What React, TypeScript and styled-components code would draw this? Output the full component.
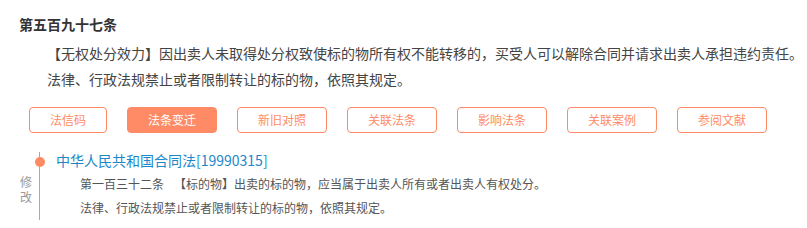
import React from "react";
import styled, { createGlobalStyle } from "styled-components";

const ACCENT = "#ff8b66";

const GlobalStyle = createGlobalStyle`
  html, body {
    margin: 0;
    padding: 0;
    background: #fff;
  }
  body {
    font-family: "Microsoft YaHei", "Noto Sans CJK SC", "Noto Sans", sans-serif;
    color: #333;
  }
`;

const tabs = ["法信码", "法条变迁", "新旧对照", "关联法条", "影响法条", "关联案例", "参阅文献"];

const Page = styled.div`
  padding: 13px 0 0 19px;
  width: 788px;
`;

const Title = styled.h3`
  margin: 0;
  font-size: 14px;
  line-height: 22px;
  font-weight: 700;
  color: #333;
`;

const Article = styled.p`
  margin: 5px 0 0;
  padding-left: 28px;
  font-size: 14px;
  line-height: 26px;
  color: #444;
`;

const TabBar = styled.div`
  display: flex;
  gap: 20px;
  margin-top: 15px;
  padding-left: 10px;
`;

const Tab = styled.button<{ $active?: boolean }>`
  height: 26px;
  padding: 0 20px;
  border: 1px solid ${ACCENT};
  border-radius: 4px;
  background: ${(p) => (p.$active ? ACCENT : "#fff")};
  color: ${(p) => (p.$active ? "#fff" : ACCENT)};
  font-family: inherit;
  font-size: 12px;
  line-height: 24px;
  cursor: pointer;
  white-space: nowrap;
`;

const Timeline = styled.div`
  display: flex;
  margin-top: 19px;
  padding-left: 1px;
`;

const Label = styled.div`
  width: 12px;
  align-self: center;
  margin-top: 6px;
  font-size: 12px;
  line-height: 15px;
  color: #999;
`;

const Track = styled.div`
  position: relative;
  width: 1px;
  margin-left: 7px;
  background: ${ACCENT};
`;

const Dot = styled.span`
  position: absolute;
  top: 5px;
  left: -4.5px;
  width: 10px;
  height: 10px;
  border-radius: 50%;
  background: ${ACCENT};
`;

const Entry = styled.div`
  padding-left: 16px;
  padding-bottom: 0;
`;

const LawLink = styled.a`
  display: block;
  font-size: 14px;
  line-height: 16px;
  color: #1c87c9;
  text-decoration: none;
`;

const Detail = styled.div`
  margin-top: 4px;
  padding-left: 24px;
  font-size: 12px;
  line-height: 24px;
  color: #555;
`;

const ArticleNo = styled.span`
  margin-right: 10px;
`;

export default function App() {
  return (
    <>
      <GlobalStyle />
      <Page>
        <Title>第五百九十七条</Title>
        <Article>
          【无权处分效力】因出卖人未取得处分权致使标的物所有权不能转移的，买受人可以解除合同并请求出卖人承担违约责任。
          法律、行政法规禁止或者限制转让的标的物，依照其规定。
        </Article>
        <TabBar>
          {tabs.map((t) => (
            <Tab key={t} $active={t === "法条变迁"}>
              {t}
            </Tab>
          ))}
        </TabBar>
        <Timeline>
          <Label>修改</Label>
          <Track>
            <Dot />
          </Track>
          <Entry>
            <LawLink href="#">中华人民共和国合同法[19990315]</LawLink>
            <Detail>
              <div>
                <ArticleNo>第一百三十二条</ArticleNo>
                【标的物】出卖的标的物，应当属于出卖人所有或者出卖人有权处分。
              </div>
              <div>法律、行政法规禁止或者限制转让的标的物，依照其规定。</div>
            </Detail>
          </Entry>
        </Timeline>
      </Page>
    </>
  );
}
